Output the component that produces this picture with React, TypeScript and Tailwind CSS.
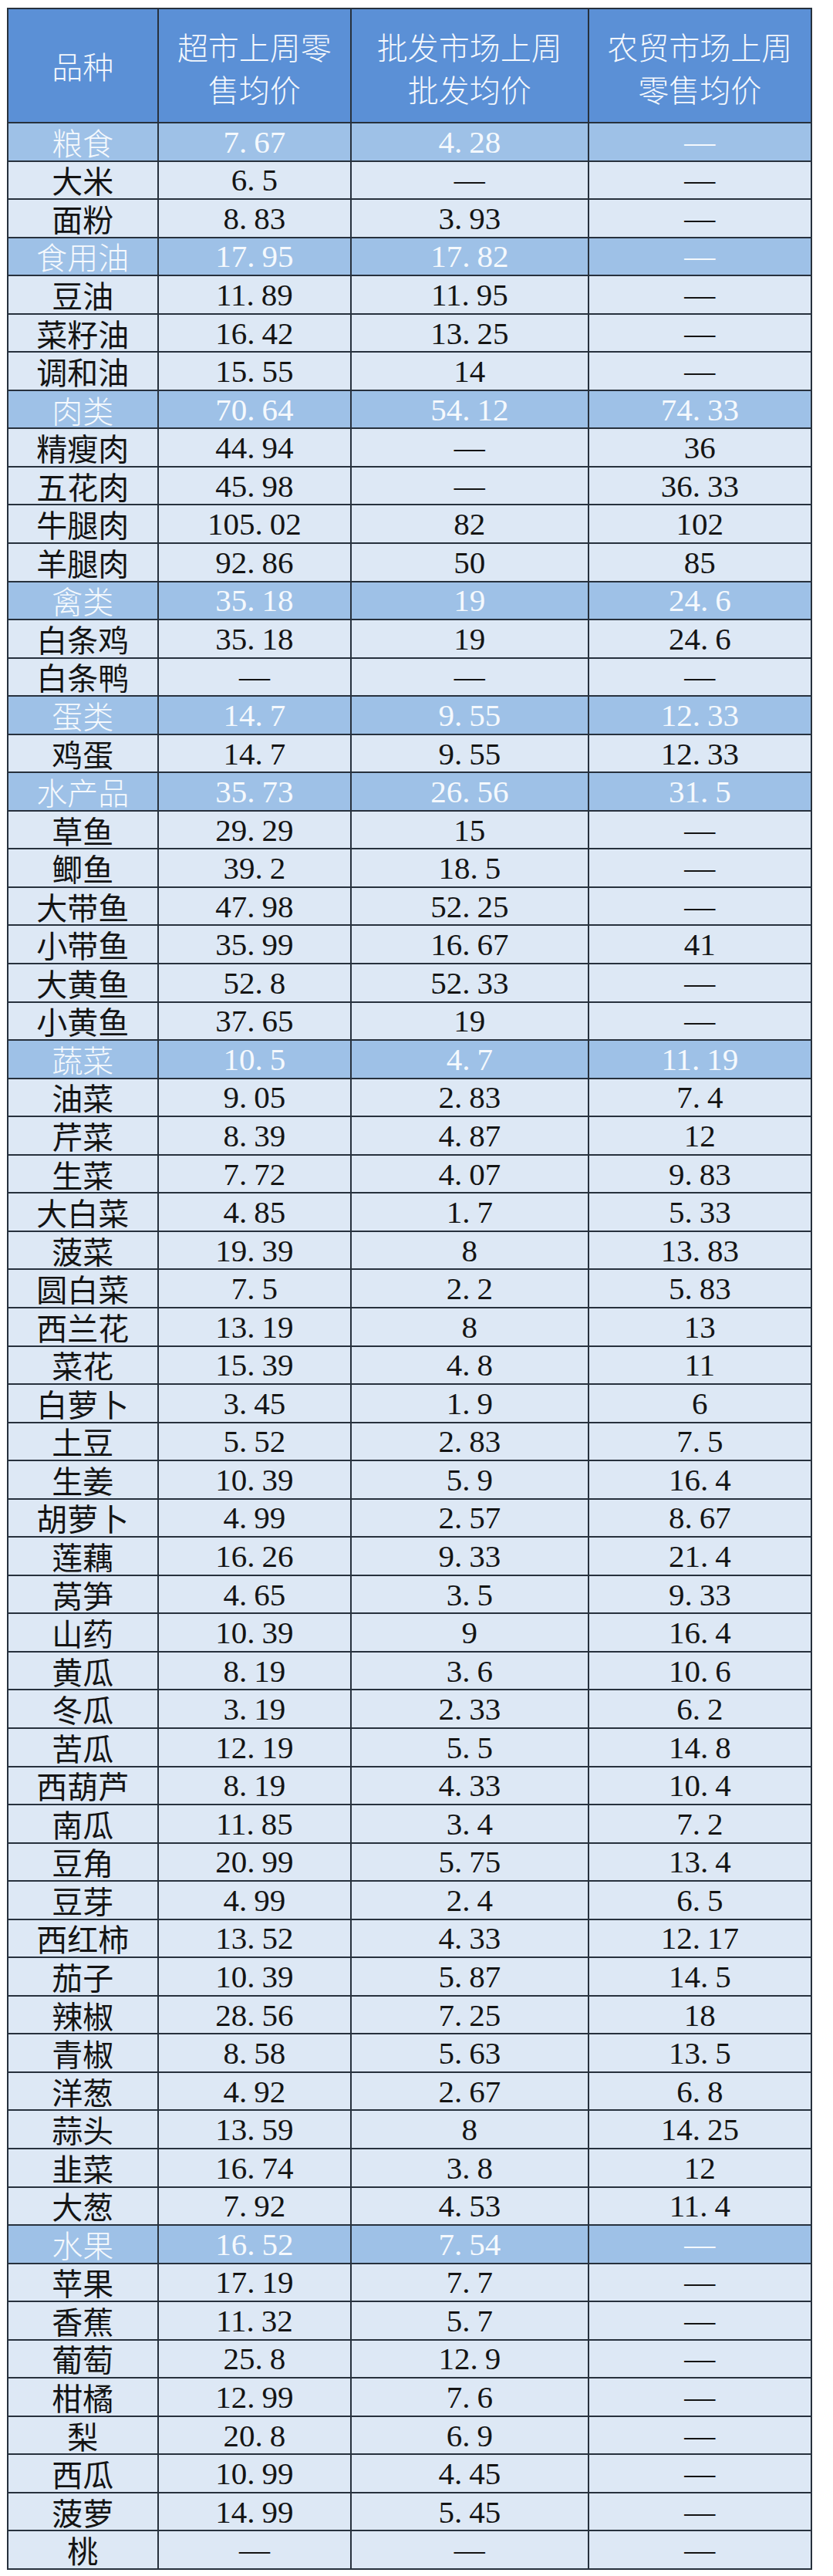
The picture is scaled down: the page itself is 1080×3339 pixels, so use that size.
import React from "react";

type Row = [string, string, string, string, boolean?];

const D = "—";
const rows: Row[] = [
  ["粮食", "7.67", "4.28", D, true],
  ["大米", "6.5", D, D],
  ["面粉", "8.83", "3.93", D],
  ["食用油", "17.95", "17.82", D, true],
  ["豆油", "11.89", "11.95", D],
  ["菜籽油", "16.42", "13.25", D],
  ["调和油", "15.55", "14", D],
  ["肉类", "70.64", "54.12", "74.33", true],
  ["精瘦肉", "44.94", D, "36"],
  ["五花肉", "45.98", D, "36.33"],
  ["牛腿肉", "105.02", "82", "102"],
  ["羊腿肉", "92.86", "50", "85"],
  ["禽类", "35.18", "19", "24.6", true],
  ["白条鸡", "35.18", "19", "24.6"],
  ["白条鸭", D, D, D],
  ["蛋类", "14.7", "9.55", "12.33", true],
  ["鸡蛋", "14.7", "9.55", "12.33"],
  ["水产品", "35.73", "26.56", "31.5", true],
  ["草鱼", "29.29", "15", D],
  ["鲫鱼", "39.2", "18.5", D],
  ["大带鱼", "47.98", "52.25", D],
  ["小带鱼", "35.99", "16.67", "41"],
  ["大黄鱼", "52.8", "52.33", D],
  ["小黄鱼", "37.65", "19", D],
  ["蔬菜", "10.5", "4.7", "11.19", true],
  ["油菜", "9.05", "2.83", "7.4"],
  ["芹菜", "8.39", "4.87", "12"],
  ["生菜", "7.72", "4.07", "9.83"],
  ["大白菜", "4.85", "1.7", "5.33"],
  ["菠菜", "19.39", "8", "13.83"],
  ["圆白菜", "7.5", "2.2", "5.83"],
  ["西兰花", "13.19", "8", "13"],
  ["菜花", "15.39", "4.8", "11"],
  ["白萝卜", "3.45", "1.9", "6"],
  ["土豆", "5.52", "2.83", "7.5"],
  ["生姜", "10.39", "5.9", "16.4"],
  ["胡萝卜", "4.99", "2.57", "8.67"],
  ["莲藕", "16.26", "9.33", "21.4"],
  ["莴笋", "4.65", "3.5", "9.33"],
  ["山药", "10.39", "9", "16.4"],
  ["黄瓜", "8.19", "3.6", "10.6"],
  ["冬瓜", "3.19", "2.33", "6.2"],
  ["苦瓜", "12.19", "5.5", "14.8"],
  ["西葫芦", "8.19", "4.33", "10.4"],
  ["南瓜", "11.85", "3.4", "7.2"],
  ["豆角", "20.99", "5.75", "13.4"],
  ["豆芽", "4.99", "2.4", "6.5"],
  ["西红柿", "13.52", "4.33", "12.17"],
  ["茄子", "10.39", "5.87", "14.5"],
  ["辣椒", "28.56", "7.25", "18"],
  ["青椒", "8.58", "5.63", "13.5"],
  ["洋葱", "4.92", "2.67", "6.8"],
  ["蒜头", "13.59", "8", "14.25"],
  ["韭菜", "16.74", "3.8", "12"],
  ["大葱", "7.92", "4.53", "11.4"],
  ["水果", "16.52", "7.54", D, true],
  ["苹果", "17.19", "7.7", D],
  ["香蕉", "11.32", "5.7", D],
  ["葡萄", "25.8", "12.9", D],
  ["柑橘", "12.99", "7.6", D],
  ["梨", "20.8", "6.9", D],
  ["西瓜", "10.99", "4.45", D],
  ["菠萝", "14.99", "5.45", D],
  ["桃", D, D, D],
];

function Num({ v }: { v: string }) {
  if (v === D) {
    return <span className="font-['Liberation_Serif',serif] leading-[38px]">—</span>;
  }
  const parts = v.split(".");
  return (
    <span className="font-['Liberation_Serif',serif] text-[41px] leading-[38px]">
      {parts[0]}
      {parts.length > 1 && (
        <>
          <span className="mr-[9px]">.</span>
          {parts[1]}
        </>
      )}
    </span>
  );
}

const cjk = "font-['Noto_Sans_CJK_SC',sans-serif]";

export default function App() {
  return (
    <div className="w-[1080px] h-[3339px] bg-white pt-[10px] pl-[9px]">
      <div className="w-[1044px] border-l-2 border-t-2 border-[#27313d]">
        <div className={`flex h-[148px] bg-[#5b90d6] text-[#f4f8fd] text-[40px] leading-[55px] ${cjk} font-light`}>
          <div className="w-[195px] border-r-2 border-b-2 border-[#27313d] flex items-center justify-center">
            品种
          </div>
          <div className="w-[251px] border-r-2 border-b-2 border-[#27313d] flex items-center justify-center text-center pt-[6px]">
            超市上周零
            <br />
            售均价
          </div>
          <div className="w-[308px] border-r-2 border-b-2 border-[#27313d] flex items-center justify-center text-center pt-[6px]">
            批发市场上周
            <br />
            批发均价
          </div>
          <div className="w-[290px] border-r-2 border-b-2 border-[#27313d] flex items-center justify-center text-center pt-[6px]">
            农贸市场上周
            <br />
            零售均价
          </div>
        </div>
        {rows.map((r, i) => {
          const cat = !!r[4];
          const rowCls = cat
            ? "bg-[#9ec1e7] text-[#f5f9fd]"
            : "bg-[#dde8f5] text-[#141414]";
          return (
            <div key={i} className={`flex h-[49.55px] text-[40px] leading-[38px] ${rowCls}`}>
              <div className={`w-[195px] border-r-2 border-b-2 border-[#27313d] flex items-center justify-center ${cjk} ${cat ? "font-light" : "font-normal"}`}>
                {r[0]}
              </div>
              <div className="w-[251px] border-r-2 border-b-2 border-[#27313d] flex items-center justify-center">
                <Num v={r[1]} />
              </div>
              <div className="w-[308px] border-r-2 border-b-2 border-[#27313d] flex items-center justify-center">
                <Num v={r[2]} />
              </div>
              <div className="w-[290px] border-r-2 border-b-2 border-[#27313d] flex items-center justify-center">
                <Num v={r[3]} />
              </div>
            </div>
          );
        })}
      </div>
    </div>
  );
}
